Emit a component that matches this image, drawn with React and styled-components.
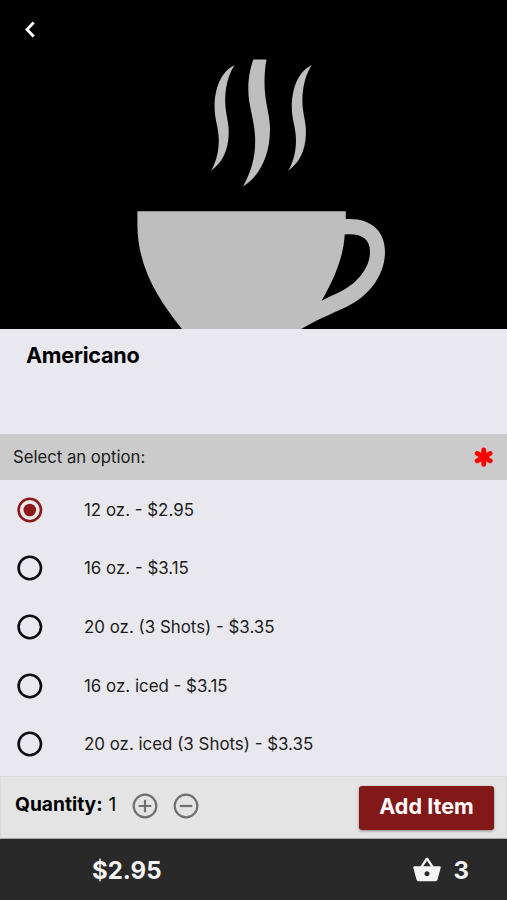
import React, { useState } from "react";
import styled, { createGlobalStyle } from "styled-components";
import { MdShoppingBasket } from "react-icons/md";

const options = [
  { id: 1, label: "12 oz. - $2.95", price: 2.95 },
  { id: 2, label: "16 oz. - $3.15", price: 3.15 },
  { id: 3, label: "20 oz. (3 Shots) - $3.35", price: 3.35 },
  { id: 4, label: "16 oz. iced - $3.15", price: 3.15 },
  { id: 5, label: "20 oz. iced (3 Shots) - $3.35", price: 3.35 },
];

export default function App() {
  const [selected, setSelected] = useState(1);
  const [quantity, setQuantity] = useState(1);
  const [cartCount, setCartCount] = useState(3);

  const current = options.find((option) => option.id === selected);

  return (
    <Screen>
      <GlobalStyle />
      <Hero>
        <BackButton aria-label="Back">
          <svg width="12" height="18" viewBox="0 0 12 18">
            <path d="M9.7 2.4 L3 9.4 L9.7 16.4" fill="none" stroke="#fff" strokeWidth="2.9" />
          </svg>
        </BackButton>
        <CoffeeCup />
      </Hero>

      <Title>Americano</Title>

      <SectionHeader>
        <span>Select an option:</span>
        <RequiredMark />
      </SectionHeader>

      <OptionList>
        {options.map((option) => (
          <Option key={option.id} onClick={() => setSelected(option.id)}>
            <Radio width="26" height="26" viewBox="0 0 26 26" $checked={option.id === selected}>
              <circle cx="12.8" cy="13" r="11.2" />
              {option.id === selected && <Dot cx="12.8" cy="13" r="6.3" />}
            </Radio>
            <OptionLabel>{option.label}</OptionLabel>
          </Option>
        ))}
      </OptionList>

      <ActionBar>
        <QuantityText>
          <QuantityLabel>Quantity:</QuantityLabel>
          <QuantityValue>{quantity}</QuantityValue>
        </QuantityText>
        <RoundButton aria-label="Add one" onClick={() => setQuantity(quantity + 1)}>
          <svg width="26" height="26" viewBox="0 0 26 26">
            <circle cx="13" cy="13" r="11.3" />
            <path d="M13 6.7 V19.3 M6.7 13 H19.3" />
          </svg>
        </RoundButton>
        <RoundButton aria-label="Remove one" onClick={() => setQuantity(Math.max(1, quantity - 1))}>
          <svg width="26" height="26" viewBox="0 0 26 26">
            <circle cx="13" cy="13" r="11.3" />
            <path d="M6.7 13 H19.3" />
          </svg>
        </RoundButton>
        <AddButton onClick={() => setCartCount(cartCount + quantity)}>Add Item</AddButton>
      </ActionBar>

      <CartBar>
        <Total>${(current.price * quantity).toFixed(2)}</Total>
        <Cart>
          <MdShoppingBasket size={30} />
          <CartCount>{cartCount}</CartCount>
        </Cart>
      </CartBar>
    </Screen>
  );
}

function CoffeeCup() {
  return (
    <svg width="507" height="329" viewBox="0 0 507 329" fill="#bebebe">
      {/* Steam */}
      <path id="steam" d="M234.5 65 C226 78 223.5 97 226.3 113 C227.5 121 229 125 228.7 134 C228.2 151 222 163 211 170.7 C217 161 219.5 148 218.6 136 C218 126 214.6 119 214.6 107 C214.6 88 221 72 234.5 65 Z" />
      <path d="M253.2 59.5 H266.5 C264.3 71 264 84 265.2 95 C266.3 106 270 117 270 129 C270 155 260 176 243 186.6 C251 172 255.2 158 255.2 141 C255.2 121 248.3 107 248.3 89 C248.3 77 250.3 69 253.2 59.5 Z" />
      <use href="#steam" x="77.2" />
      {/* Cup */}
      <path d="M137.4 211.3 H345.8 V219 C371 217.5 385 231 385 251.7 C385 277 367 297 346.7 306.7 C331 314 312 322 301.2 329 H182 C158 299 137.4 267 137.4 224 Z" />
      {/* Gap inside the handle */}
      <path d="M344.7 234.5 C361 233 370 238.5 370 251.7 C370 268 357 283 341.7 291 C335 294.5 328 297 321.6 300.8 C333.5 280 343.5 258 344.7 234.5 Z" fill="#000" />
    </svg>
  );
}

function RequiredMark() {
  return (
    <svg width="20" height="20" viewBox="0 0 20 20" fill="none" stroke="#ff0000" strokeWidth="4.8" strokeLinecap="round">
      <path d="M9.7 2.8 V17.4 M3.2 6.4 L16.2 13.8 M16.2 6.4 L3.2 13.8" />
    </svg>
  );
}

// Styled Components

const GlobalStyle = createGlobalStyle`
  * {
    box-sizing: border-box;
  }
  body {
    margin: 0;
    background: #e9e8ee;
    font-family: Inter, "Liberation Sans", sans-serif;
  }
  button {
    border: none;
    padding: 0;
    font-family: inherit;
    cursor: pointer;
  }
`;

const Screen = styled.div`
  display: flex;
  flex-direction: column;
  width: 507px;
  height: 900px;
  overflow: hidden;
  background: #e9e8ee;
  color: #000;
`;

const Hero = styled.div`
  position: relative;
  height: 329px;
  flex-shrink: 0;
  background: #000;

  svg {
    display: block;
  }
`;

/* Floats over the picture */
const BackButton = styled.button`
  position: absolute;
  top: 20px;
  left: 24px;
  background: none;
`;

const Title = styled.h1`
  height: 105px;
  margin: 0;
  padding: 12px 26px;
  font-size: 21.6px;
  font-weight: 700;
  line-height: 28px;
  letter-spacing: -0.25px;
`;

const SectionHeader = styled.div`
  display: flex;
  align-items: center;
  justify-content: space-between;
  height: 46px;
  padding: 0 13px;
  background: #cbcbcb;
  color: #1a1a1a;
  font-size: 16.7px;
  line-height: 20px;

  span {
    padding-bottom: 1px;
  }
`;

const OptionList = styled.div`
  flex: 1;
  padding-top: 0.5px;
`;

const Option = styled.div`
  display: flex;
  align-items: center;
  height: 58.6px;
  padding-left: 17px;
  cursor: pointer;
`;

const Radio = styled.svg`
  margin-right: 41px;
  fill: none;
  stroke: ${(props) => (props.$checked ? "#8b1a1a" : "#0c0c10")};
  stroke-width: 2.6;
`;

const Dot = styled.circle`
  fill: #8b1a1a;
  stroke: none;
`;

const OptionLabel = styled.span`
  color: #1c1c20;
  font-size: 16.9px;
`;

const ActionBar = styled.div`
  display: flex;
  align-items: center;
  height: 63px;
  padding: 0 12px 3px 14px;
  background: #e4e4e4;
  border: 1px solid #dadada;
  border-bottom: 1px solid #a8a8a8;
`;

const QuantityText = styled.div`
  display: flex;
  padding-bottom: 5px;
  font-size: 19.2px;
`;

const QuantityLabel = styled.span`
  width: 93.5px;
  font-weight: 700;
`;

const QuantityValue = styled.span`
  width: 23px;
`;

const RoundButton = styled.button`
  width: 26px;
  height: 26px;
  margin-right: 15.5px;
  background: none;

  svg {
    display: block;
    fill: none;
    stroke: #707070;
    stroke-width: 2.2;
  }
`;

const AddButton = styled.button`
  width: 135px;
  height: 44px;
  margin: 4px 0 0 auto;
  padding-bottom: 5px;
  border-radius: 3px;
  background: #821818;
  box-shadow: 0 1px 3px rgba(0, 0, 0, 0.4);
  color: #fff;
  font-size: 21.6px;
  font-weight: 700;
`;

const CartBar = styled.div`
  display: flex;
  align-items: center;
  justify-content: space-between;
  height: 61px;
  padding: 1px 38px 0 92px;
  background: #292929;
  color: #f4f4f4;
`;

const Total = styled.span`
  padding-top: 1px;
  font-size: 24px;
  font-weight: 700;
`;

const Cart = styled.div`
  display: flex;
  align-items: center;
`;

const CartCount = styled.span`
  margin-left: 12px;
  padding-top: 1px;
  font-size: 24px;
  font-weight: 700;
`;
